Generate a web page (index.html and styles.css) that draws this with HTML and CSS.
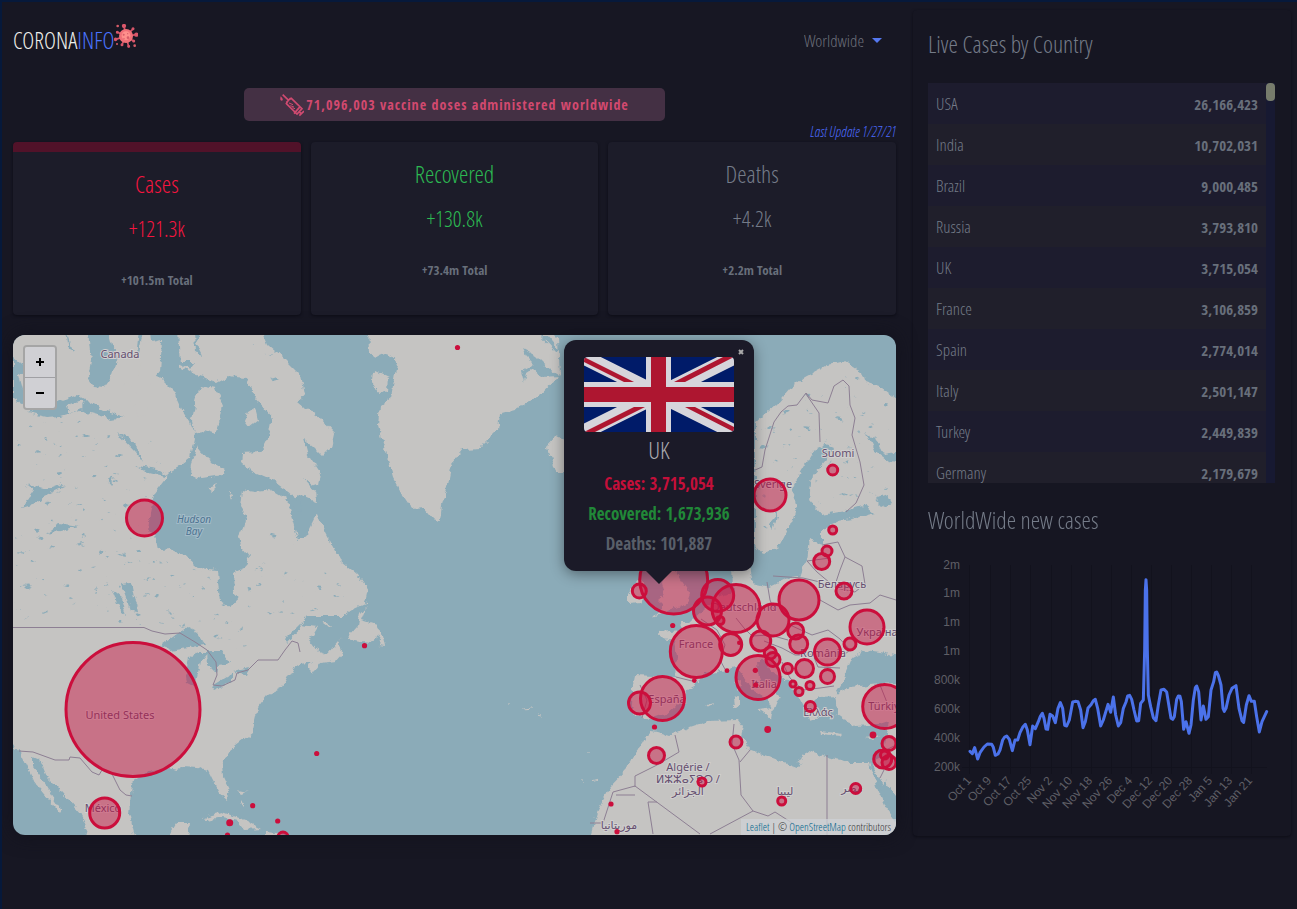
FILE: index.html
```html
<!DOCTYPE html>
<html lang="en">
<head>
<meta charset="utf-8">
<meta name="viewport" content="width=device-width, initial-scale=1">
<title>CoronaInfo</title>
<link rel="stylesheet" href="styles.css">
</head>
<body>
<div class="app">
  <main class="main">
    <header class="header">
      <h1 class="logo">CORONA<span class="logo-accent">INFO</span><svg class="logo-icon" viewBox="0 0 72 72" aria-hidden="true">
        <g stroke="#d8566a" stroke-width="5" stroke-linecap="round" fill="#e0606a">
          <path d="M36 36 30 6M36 36 58 14M36 36 68 32M36 36 60 52M36 36 44 68M36 36 24 62M36 36 5 46M36 36 9 24"/>
          <circle cx="30" cy="6" r="4"/><circle cx="57" cy="14" r="2"/><circle cx="67" cy="32" r="4"/><circle cx="59" cy="51" r="2"/><circle cx="44" cy="67" r="2"/><circle cx="24" cy="62" r="2"/><circle cx="5" cy="46" r="3"/><circle cx="10" cy="25" r="2"/>
        </g>
        <circle cx="36" cy="36" r="21" fill="#f07078"/><circle cx="36" cy="35" r="13" fill="#ff908c"/>
        <g fill="#d65c68"><circle cx="29" cy="32" r="3"/><circle cx="41" cy="29" r="2"/><circle cx="42" cy="41" r="4"/><circle cx="30" cy="44" r="2"/><circle cx="11" cy="6" r="4"/><circle cx="62" cy="65" r="4"/><circle cx="9" cy="60" r="3"/></g>
      </svg></h1>
      <div class="picker">
        <select class="picker-select" aria-label="Country"><option>Worldwide</option></select>
        <span class="picker-arrow"></span>
      </div>
    </header>

    <p class="banner"><svg class="banner-icon" viewBox="0 0 72 68" fill="none" stroke="#d04a70" stroke-width="5" aria-hidden="true">
      <path d="M8 3 26 20M19 27 32 13M23 23 19 30 51 61 66 45 34 14 29 17M42 60 61 38M55 54 66 60M58 66 72 52"/>
      <path d="M27 28 39 33M31 36 42 40M37 42 45 45" stroke-width="3"/>
      <path d="M2 8C0 16 0 21 5 21S10 16 2 8Z" fill="#d04a70" stroke="none"/>
    </svg>71,096,003 vaccine doses administered worldwide</p>
    <p class="updated">Last Update 1/27/21</p>

    <section class="stats">
      <article class="stat stat-cases stat-active"><h2 class="stat-title">Cases</h2><p class="stat-number">+121.3k</p><p class="stat-total">+101.5m Total</p></article>
      <article class="stat stat-recovered"><h2 class="stat-title">Recovered</h2><p class="stat-number">+130.8k</p><p class="stat-total">+73.4m Total</p></article>
      <article class="stat stat-deaths"><h2 class="stat-title">Deaths</h2><p class="stat-number">+4.2k</p><p class="stat-total">+2.2m Total</p></article>
    </section>

    <section class="map">
      <svg class="map-canvas" viewBox="13 335 883 500" preserveAspectRatio="xMidYMid slice" role="img" aria-label="Map of cases">
        <defs>
          <filter id="coast" x="-5%" y="-5%" width="110%" height="110%" color-interpolation-filters="sRGB">
            <feTurbulence type="fractalNoise" baseFrequency="0.13" numOctaves="4" seed="4" result="n"/>
            <feDisplacementMap in="SourceGraphic" in2="n" scale="7" xChannelSelector="R" yChannelSelector="G"/>
          </filter>
          <filter id="ponds" x="0" y="0" width="100%" height="100%" color-interpolation-filters="sRGB">
            <feTurbulence type="fractalNoise" baseFrequency="0.09 0.12" numOctaves="4" seed="11"/>
            <feColorMatrix values="0 0 0 0 .545  0 0 0 0 .671  0 0 0 0 .722  12 0 0 0 -8.7"/>
            <feComposite in2="SourceAlpha" operator="in"/>
          </filter>
        </defs>
        <rect x="13" y="335" width="883" height="500" fill="#8babb8"/>

        <g filter="url(#coast)">
          <!-- North America -->
          <g fill="#c5c4c2">
            <path d="M0 320H258L268 345 283 358 300 375 304 395 298 402 305 408 320 418 335 434 332 448 323 457 313 447 304 440 308 455 320 473 318 487 304 478 316 492 317 502 305 497 300 494 288 505 298 540 307 534 317 514 326 533 335 550 340 560 358 575 368 590 365 604 352 610 343 616 307 616 300 625 318 627 310 640 319 652 336 658 300 664 293 668 283 687 267 695 258 707 252 733 230 750 222 763 223 777 229 790 227 799 220 793 213 780 208 770 197 767 183 766 177 770 167 768 150 772 133 780 131 793 129 813 137 845H84L88 830 80 813 63 793 47 777 40 760 33 757 33 767 43 780 53 797 62 810 60 813 43 793 33 780 27 767 20 753 13 745H0Z"/>
            <path d="M342 636 338 642 342 654 336 661 320 663 313 673 308 668 313 660 327 654ZM367 605 361 620 377 625 383 637 385 646 378 645 380 635 370 642 352 640 348 637 358 626 360 613ZM320 620 334 625 328 626ZM170 835 177 823 189 823 187 840H170ZM204 817 222 812 245 820 262 829 245 830 238 821 222 817 205 820ZM237 790 247 792 241 794ZM241 800 244 808 240 805ZM265 832 288 834 289 840H265Z"/>
          </g>
          <g fill="#8babb8">
            <path d="M88 330H108L112 345 118 355 111 378 104 388 94 387 88 377 91 361ZM66 330 73 352 69 350ZM139 330H143L139 355 137 348ZM150 330H178L180 366 194 374 217 382 228 376 246 378 255 397 272 417 268 438 261 452 242 453 241 462 250 470 273 480 300 500 301 514 285 499 270 490 256 492 242 490 240 506 247 517 244 528 239 538 243 549 249 557 244 568 233 573 234 591 238 599 231 607 220 601 217 570 200 568 188 558 170 549 159 550 157 540 148 531 150 514 154 494 169 474 190 458 195 434 190 423 183 412 174 392 158 376 152 351ZM194 330H201L197 345 202 355 195 353ZM176 362 195 362 190 368ZM28 413 44 406 78 395 104 410 124 417 112 419 80 410 60 416 46 417ZM13 357 28 370 19 375 26 401 13 398ZM13 395 27 403 20 405Z"/>
            <path d="M22 508 34 490 26 484 36 487 46 490 62 484 65 486 44 496 38 503ZM46 534 59 524 79 527 61 531ZM117 432 135 442 142 461 136 452ZM135 466 158 469 170 477 148 472ZM107 480 111 474 112 486ZM101 548 106 550 99 556ZM121 584 131 583 137 611 131 610ZM112 590 122 598 127 617 120 611ZM180 627 184 626 183 624ZM160 647 178 634 187 627 197 632 205 645 181 648 169 650ZM186 675 189 656 200 652 208 652 200 662 195 687 187 683ZM206 651 222 651 231 663 219 665 217 675 207 665ZM213 685 233 673 233 681 216 689ZM232 671 250 667 247 675ZM284 640 300 624 301 628 286 644Z"/>
          </g>
          <g fill="#c5c4c2">
            <path d="M200 385 215 388 222 405 217 434 204 430 195 435 192 420 195 405ZM197 446 208 460 225 469 222 475 202 478 190 475 191 463ZM247 413 255 408 258 420 249 427 244 420ZM207 487 217 483 212 491ZM229 491 233 493 231 500ZM122 386 130 383 137 394 130 400ZM140 345 162 341 160 372 150 385 139 376ZM67 406 84 400 82 408 70 413ZM135 405 143 402 149 414 138 418Z"/>
          </g>
          <!-- Greenland and Iceland -->
          <path fill="#c5c4c2" d="M368 325H545L558 338 560 375 536 398 515 410 500 414 498 430 480 448 463 449 452 463 448 484 442 505 440 521 433 519 424 508 412 509 402 494 393 477 386 452 378 424 380 405 391 397 397 363 388 353 379 357 369 353ZM374 370 389 377 388 390 378 393 373 382ZM546 447 556 436 570 443V472H556L552 458 548 456Z"/>
          <path fill="#8babb8" d="M540 335 547 335 558 348 556 352ZM522 348 535 355 542 362 552 371 560 376 541 377 532 369 526 373 524 382 521 371 534 364 526 356Z"/>
          <!-- Europe, Turkey and the Levant -->
          <g fill="#c5c4c2">
            <path d="M910 405 896 398 882 388 865 382 862 372 845 361 828 365 805 377 788 390 776 404 767 412 755 422V545L763 554 780 545 791 524 796 505 792 490 800 474 815 449 826 445 833 448 826 460 812 476 809 500 822 515 845 511 866 505 875 513 852 519 838 521 822 529 822 544 810 540 807 560 803 568 800 577 789 578 770 587 752 583 748 560 733 562 734 592 716 597 703 610 690 622 681 622 682 630 658 632 663 638 674 640 677 656 675 677 635 675 633 685 632 706 635 715 650 719 668 713 685 698 687 690 698 684 704 674 718 672 736 667 744 678 752 689 766 698 773 711 777 701 782 700 775 693 763 684 758 673 757 660 764 660 770 670 788 681 797 693 804 706 809 720 820 717 813 703 820 696 835 695 842 684 844 678 853 657 866 650 880 652 910 658V682L880 684 850 687 834 695 838 715 854 726 876 725 889 721 885 740 881 757 871 762 878 780 884 792 884 778 910 815Z"/>
            <path d="M662 583 670 560 681 580 690 593 686 604 670 610 652 617 664 606 658 600 665 594ZM640 578 647 592 640 603 628 604 628 594ZM757 710 773 708 771 719ZM733 697 739 695 739 706 734 707ZM735 681 740 679 739 692ZM820 731 844 734 842 736 821 734ZM866 737 880 734 873 739ZM706 705 712 702 710 707ZM808 569 819 569 818 573Z"/>
            <!-- Africa -->
            <path d="M588 845 597 812 610 787 627 769 632 757 643 743 650 730 658 731 670 735 690 727 708 721 738 720 743 727 741 735 750 750 770 757 797 767 801 757 810 750 827 757 850 762 869 762 876 785 887 810 902 832V845Z"/>
          </g>
          <g fill="#8babb8">
            <path d="M866 433 878 441 885 455 910 450V465L890 462 874 450ZM875 500 888 495 892 502 882 507ZM903 500 910 515V490ZM868 764 879 787 900 823V803L887 788 887 778 883 787 874 770ZM770 522 778 512 773 532Z"/>
          </g>
          <path fill="none" stroke="#c5c4c2" d="M507 703H509M521 709 532 708M538 715 542 716M587 751H590M583 778V783M590 781 597 779M252 715 256 707"/>
        </g>

        <g filter="url(#ponds)">
          <path d="M14 425 80 420 140 430 165 455 145 500 145 545 165 560 212 575 220 605 240 600 260 560 280 510 300 560 340 580 345 605 290 615 240 650 190 625 14 625ZM755 430 800 390 850 370 890 405 896 500 850 505 820 510 815 480 840 450 820 440 780 480 775 535 755 540Z"/>
          <path d="M270 335 300 375 300 395 285 400 262 365 240 335Z"/>
        </g>

        <g fill="none" stroke="#8d7f93" stroke-width="1">
          <path d="M13 627.500H144L152 631 165 634 180 633 195 642 207 650 216 662 217 675 213 685 222 686 235 680 237 673 248 670 258 660 278 660 285 650 292 641 298 643 300 652M19 751 33 752 55 760 69 760 70 757 80 758 92 772 99 775 102 770 112 774 120 790 126 795 132 796"/>
          <path d="M755 470 762 467 765 450 774 422 781 412 788 406 797 405 806 393 812 400 828 403 834 386 843 380 849 386 850 405 855 418 852 435 860 462 864 485 856 503 846 512M806 394 819 413 820 442"/>
          <path d="M822 545 838 542 845 557 862 566 865 584 855 592 836 588 817 572 807 561 830 558M767 582 770 600 775 612M773 576 803 578 820 582M845 557 840 570 835 585M820 600 838 610 850 605 870 603 880 595 896 600M790 625 812 635 828 630 840 639 850 650 840 658M736 618 744 628 752 636 770 635 788 640M701 619 717 630 725 645 720 660 726 671M676 677 696 682M640 685 647 700 642 718M764 641 782 648 795 655 813 655 818 667 840 668M782 662 790 678 803 690 820 688 834 686M880 685 888 705"/>
          <path d="M675 735 679 752 657 765 635 776V787M635 786 700 834M590 823H603L613 792 635 786M616 795H635M648 802H657M648 802 653 834M710 834 753 811 741 795 739 760 732 744 734 724M753 811 768 816 775 812 800 828M827 755V835M740 762 750 750M881 754 884 770 880 778M886 750 896 745"/>
        </g>

        <g class="map-labels">
          <text x="120" y="358">Canada</text><text class="water" x="194" y="523">Hudson</text><text class="water" x="194" y="535">Bay</text>
          <text x="120" y="719">United States</text><text x="103" y="812">México</text><text x="838" y="457">Suomi</text><text x="773" y="488">Sverige</text>
          <text x="842" y="588">Беларусь</text><text x="744" y="611">Deutschland</text><text x="696" y="648">France</text><text x="823" y="657">România</text>
          <text x="877" y="636">Україна</text><text x="764" y="688">Italia</text><text x="667" y="703">España</text><text x="818" y="716">Ελλάς</text><text x="887" y="710">Türkiye</text>
          <text x="688" y="771">Algérie /</text><text x="688" y="783">ⵍⵣⵣⴰⵢⴻⵔ /</text><text x="688" y="795">الجزائر</text><text x="785" y="795">ليبيا</text><text x="852" y="792">مصر</text><text x="619" y="829">موريتانيا</text>
        </g>

        <g class="bubbles">
          <circle cx="144.500" cy="518" r="18"/><circle cx="133" cy="709.500" r="67"/><circle cx="104.700" cy="813" r="15"/>
          <circle cx="283" cy="837" r="5"/><circle cx="770" cy="495" r="16"/><circle cx="832.700" cy="470" r="5"/><circle cx="832.700" cy="530" r="4"/>
          <circle cx="827" cy="551" r="5"/><circle cx="821.700" cy="561.500" r="8"/><circle cx="673.700" cy="580" r="34"/><circle cx="639.300" cy="591" r="7"/>
          <circle cx="717.700" cy="595.500" r="16"/><circle cx="707.500" cy="611" r="14"/><circle cx="736" cy="608.500" r="24"/><circle cx="720" cy="620.500" r="4"/>
          <circle cx="799" cy="600" r="20"/><circle cx="773" cy="620" r="16"/><circle cx="844" cy="591" r="8"/><circle cx="795.700" cy="631" r="8"/>
          <circle cx="798.700" cy="644" r="9"/><circle cx="827.500" cy="652" r="13"/><circle cx="850" cy="644" r="6"/><circle cx="867" cy="627" r="17"/>
          <circle cx="696.300" cy="651.500" r="26"/><circle cx="730.700" cy="644.500" r="11"/><circle cx="760.700" cy="641" r="10"/><circle cx="770.300" cy="653" r="6"/>
          <circle cx="773" cy="659.500" r="7"/><circle cx="758" cy="677.500" r="22"/><circle cx="787.500" cy="668.500" r="5"/><circle cx="804.500" cy="668.500" r="9"/>
          <circle cx="827.500" cy="676.500" r="7"/><circle cx="793" cy="684" r="3"/><circle cx="810" cy="685.500" r="4"/><circle cx="799" cy="691.500" r="4"/>
          <circle cx="810.300" cy="706.500" r="5"/><circle cx="884.700" cy="706.500" r="22"/><circle cx="662.500" cy="698.500" r="22"/><circle cx="639.500" cy="703" r="11"/>
          <circle cx="656.500" cy="755.500" r="8"/><circle cx="736" cy="742" r="6"/><circle cx="702" cy="782" r="4"/><circle cx="781.700" cy="801" r="4"/>
          <circle cx="855.700" cy="788.500" r="5"/><circle cx="889" cy="743.500" r="7"/><circle cx="882.700" cy="759" r="9"/><circle cx="884.500" cy="755" r="4"/><circle cx="889" cy="762.500" r="7"/>
        </g>
        <g fill="#cb0e3c">
          <circle cx="457.500" cy="347.500" r="2.600"/><circle cx="364.500" cy="645.700" r="2.600"/><circle cx="316.700" cy="753.500" r="2.600"/><circle cx="252.700" cy="805.700" r="2.600"/><circle cx="229.700" cy="822.700" r="3.500"/><circle cx="277.700" cy="821" r="2.600"/><circle cx="227.500" cy="835" r="2.600"/>
          <circle cx="739.300" cy="642.700" r="2.300"/><circle cx="755.300" cy="670.300" r="2.600"/><circle cx="755.700" cy="685" r="2.600"/><circle cx="727" cy="670.700" r="2.400"/><circle cx="694.300" cy="680.500" r="2.400"/><circle cx="672.700" cy="625.500" r="2.600"/>
          <circle cx="654.500" cy="727" r="2.600"/><circle cx="767.700" cy="729.500" r="3.400"/><circle cx="873" cy="735" r="3.400"/><circle cx="611" cy="804" r="2.600"/><circle cx="617" cy="831.700" r="2.600"/>
        </g>
      </svg>

      <div class="zoom">
        <button class="zoom-button" type="button" aria-label="Zoom in"><span class="bar"></span><span class="bar bar-upright"></span></button>
        <button class="zoom-button" type="button" aria-label="Zoom out"><span class="bar"></span></button>
      </div>

      <aside class="popup">
        <button class="popup-close" type="button" aria-label="Close"><svg viewBox="0 0 6 6"><path d="M1 1 5 5M5 1 1 5" stroke="#aaa" stroke-width="2"/></svg></button>
        <svg class="flag" viewBox="0 0 150 75" role="img" aria-label="Flag of the United Kingdom">
          <path fill="#001b69" d="M0 0H150V75H0Z"/>
          <path stroke="#d6d5db" stroke-width="15" d="M0 0 150 75M150 0 0 75"/>
          <path fill="#ae1630" d="M0 0V5L40 25H50ZM150 0H139L90 25H101ZM150 75V70L111 50H101ZM0 75H11L61 50H50Z"/>
          <path fill="#d6d5db" d="M62 0H87V25H150V50H87V75H62V50H0V25H62Z"/>
          <path fill="#ae1630" d="M67 0H82V30H150V45H82V75H67V45H0V30H67Z"/>
        </svg>
        <h2 class="popup-name">UK</h2>
        <p class="popup-line popup-cases">Cases: 3,715,054</p>
        <p class="popup-line popup-recovered">Recovered: 1,673,936</p>
        <p class="popup-line popup-deaths">Deaths: 101,887</p>
      </aside>

      <p class="credit"><a href="#leaflet">Leaflet</a> | © <a href="#osm">OpenStreetMap</a> contributors</p>
    </section>
  </main>

  <aside class="side">
    <h2 class="side-title">Live Cases by Country</h2>
    <div class="scroller">
      <div class="scroller-view">
        <table class="countries">
          <tr><td>USA</td><td class="count">26,166,423</td></tr>
          <tr><td>India</td><td class="count">10,702,031</td></tr>
          <tr><td>Brazil</td><td class="count">9,000,485</td></tr>
          <tr><td>Russia</td><td class="count">3,793,810</td></tr>
          <tr><td>UK</td><td class="count">3,715,054</td></tr>
          <tr><td>France</td><td class="count">3,106,859</td></tr>
          <tr><td>Spain</td><td class="count">2,774,014</td></tr>
          <tr><td>Italy</td><td class="count">2,501,147</td></tr>
          <tr><td>Turkey</td><td class="count">2,449,839</td></tr>
          <tr><td>Germany</td><td class="count">2,179,679</td></tr>
        </table>
      </div>
      <div class="scroller-track"><div class="scroller-thumb"></div></div>
    </div>
    <h2 class="side-title">WorldWide new cases</h2>
    <svg class="chart" viewBox="928 550 347 270" role="img" aria-label="New cases per day">
      <path d="M969.500 565V774M990.500 565V774M1010.500 565V774M1030.500 565V774M1051.500 565V774M1071.500 565V774M1091.500 565V774M1111.500 565V774M1131.500 565V774M1151.500 565V774M1171.500 565V774M1191.500 565V774M1211.500 565V774M1231.500 565V774M1251.500 565V774M962 767.500H1267" stroke="#12121d" fill="none"/>
      <g class="axis axis-y"><text x="960" y="569">2m</text><text x="960" y="597">1m</text><text x="960" y="626">1m</text><text x="960" y="655">1m</text><text x="960" y="684">800k</text><text x="960" y="713">600k</text><text x="960" y="742">400k</text><text x="960" y="771">200k</text></g>
      <g class="axis">
        <text transform="translate(972 781) rotate(-48)">Oct 1</text><text transform="translate(992 781) rotate(-48)">Oct 9</text><text transform="translate(1012 781) rotate(-48)">Oct 17</text><text transform="translate(1032 781) rotate(-48)">Oct 25</text><text transform="translate(1053 781) rotate(-48)">Nov 2</text><text transform="translate(1073 781) rotate(-48)">Nov 10</text><text transform="translate(1093 781) rotate(-48)">Nov 18</text><text transform="translate(1113 781) rotate(-48)">Nov 26</text><text transform="translate(1133 781) rotate(-48)">Dec 4</text><text transform="translate(1153 781) rotate(-48)">Dec 12</text><text transform="translate(1173 781) rotate(-48)">Dec 20</text><text transform="translate(1193 781) rotate(-48)">Dec 28</text><text transform="translate(1213 781) rotate(-48)">Jan 5</text><text transform="translate(1233 781) rotate(-48)">Jan 13</text><text transform="translate(1253 781) rotate(-48)">Jan 21</text>
      </g>
      <polyline transform="translate(910 490) scale(.33333)" fill="none" stroke="#4b72ea" stroke-width="9" stroke-linejoin="round" stroke-linecap="round" points="180,784 187,791 194,773 203,807 210,788 222,771 232,762 245,763 250,772 256,796 264,792 270,780 278,750 284,741 290,738 298,748 307,782 315,750 323,750 330,728 338,712 346,703 352,720 360,764 368,708 376,716 385,695 391,679 397,670 402,685 408,717 413,718 420,673 428,678 436,698 444,655 451,638 458,655 464,706 470,708 478,690 488,636 496,634 504,635 512,660 519,713 526,695 534,654 543,644 550,632 556,628 563,655 572,708 580,690 594,643 602,667 610,621 617,675 625,708 632,698 640,655 648,636 653,618 659,616 665,628 672,660 680,693 686,692 692,640 700,630 704,480 706,300 708,269 710,300 712,480 715,615 722,650 730,683 738,692 745,645 753,600 762,598 770,606 778,655 783,685 788,688 793,680 800,628 805,618 810,619 814,635 821,718 828,695 837,730 843,705 850,630 856,593 860,588 866,605 873,690 880,648 888,688 895,680 903,600 911,575 916,548 920,546 925,556 933,585 939,655 943,664 948,655 957,615 966,595 978,587 987,655 996,692 1001,697 1009,645 1017,617 1024,634 1033,634 1040,680 1048,726 1056,695 1070,665"/>
    </svg>
  </aside>
</div>
</body>
</html>
```
FILE: styles.css
```css
* { box-sizing: border-box; }
body {
  margin: 0;
  min-height: 100vh;
  background: #171723;
  border: solid #06193b;
  border-width: 2px 0 0 2px;
  color: #747b88;
  font-family: "Open Sans Condensed Light", "Roboto Condensed", "Liberation Sans", sans-serif;
  font-size: 16px;
}
h1, h2, p { margin: 0; font-weight: 400; }
.app {
  display: grid;
  grid-template-columns: minmax(0, 883fr) minmax(0, 378fr);
  gap: 17px;
  padding: 8px 6px 0 11px;
}

.header { display: flex; justify-content: space-between; align-items: center; height: 60px; }
.logo { display: flex; align-items: center; color: #f0f0ec; font-size: 23px; line-height: 32px; }
.logo-accent { color: #4a74ff; }
.logo-icon { width: 24px; height: 24px; margin-bottom: 8px; }
.picker { display: flex; align-items: center; gap: 7px; padding-right: 14px; }
.picker-select { appearance: none; border: 0; padding: 0; background: none; color: #6c6f7a; font: inherit; font-size: 17px; }
.picker-arrow { border: 5px solid transparent; border-top-color: #5578f0; border-bottom: 0; }

.banner, .stat-total, .popup-line, .count { font-family: "Open Sans Condensed", "Roboto Condensed", "Liberation Sans", sans-serif; font-weight: 700; }
.banner {
  display: flex;
  align-items: center;
  justify-content: center;
  gap: 2px;
  width: 421px;
  max-width: 100%;
  height: 33px;
  margin: 18px auto 0;
  border-radius: 5px;
  background: #443044;
  color: #d2496f;
  font-size: 14px;
  letter-spacing: 1px;
}
.banner-icon { width: 24px; height: 24px; }
.updated { height: 21px; color: #4d6cff; font-size: 14px; font-style: italic; line-height: 21px; text-align: right; }

.stats { display: grid; grid-template-columns: repeat(3, minmax(0, 1fr)); gap: 10px; }
.stat {
  min-height: 173px;
  padding: 16px;
  border-radius: 4px;
  background: #1c1c29;
  box-shadow: 0 1px 3px #0d0d16;
  text-align: center;
}
.stat-active { border-top: 10px solid #511229; }
.stat-title, .stat-number { font-size: 24px; line-height: 32px; }
.stat-number { margin-top: 12px; font-size: 22px; }
.stat-total { margin-top: 26px; color: #686f7b; font-size: 13px; line-height: 20px; }
.stat-cases .stat-title, .stat-cases .stat-number { color: #f5153f; }
.stat-recovered .stat-title, .stat-recovered .stat-number { color: #2cb852; }

.map { position: relative; height: 500px; margin-top: 20px; border-radius: 12px; box-shadow: 0 0 20px #12121c; }
.map-canvas { display: block; width: 100%; height: 100%; border-radius: 12px; }
.map-labels { fill: #66506f; stroke: #d0cfcf; stroke-width: 2px; paint-order: stroke; font-family: "Noto Sans", "DejaVu Sans", sans-serif; font-size: 11px; text-anchor: middle; }
.map-labels .water { fill: #4d7391; stroke: #a2bbc8; font-style: italic; font-size: 10px; }
.bubbles { fill: #cc1040; fill-opacity: .45; stroke: #cb0e3c; stroke-width: 3px; }
.zoom { position: absolute; top: 10px; left: 10px; border: 2px solid #a5a5a5; border-radius: 4px; overflow: hidden; }
.zoom-button { position: relative; display: grid; place-items: center; width: 30px; height: 30px; border: 0; padding: 0; background: #d0d0d4; }
.zoom-button + .zoom-button { height: 31px; border-top: 1px solid #a0a0a4; }
.bar { grid-area: 1 / 1; width: 8px; height: 2px; background: #000; }
.bar-upright { width: 2px; height: 8px; }

.popup {
  position: absolute;
  top: 5px;
  left: 551px;
  width: 190px;
  padding: 17px 20px 12px;
  border-radius: 12px;
  background: #1b1a28;
  box-shadow: 0 3px 14px rgba(0, 0, 0, .4);
  text-align: center;
}
.popup::after { content: ""; position: absolute; top: 100%; left: 50%; margin-left: -13px; border: 13px solid transparent; border-top-color: #1b1a28; border-bottom: 0; }
.popup-close { position: absolute; top: 9px; right: 10px; display: flex; border: 0; padding: 0; background: none; }
.popup-close svg { width: 6px; height: 6px; }
.flag { display: block; width: 100%; border-radius: 4px; }
.popup-name { margin-bottom: 2px; color: #ababb0; font-size: 24px; line-height: 35px; }
.popup-line { font-size: 17px; line-height: 30px; white-space: nowrap; }
.popup-cases { color: #c40f3a; }
.popup-recovered { color: #218838; }
.popup-deaths { color: #595f69; }
.credit { position: absolute; right: 0; bottom: 0; padding: 0 5px; border-bottom-right-radius: 12px; background: rgba(205, 210, 214, .75); color: #333; font-size: 11px; line-height: 16px; }
.credit a { color: #00658c; text-decoration: none; }

.side { padding: 18px 16px 16px 15px; border-radius: 4px; background: #161622; box-shadow: 0 1px 3px #0d0d16; }
.side-title { font-size: 24px; line-height: 32px; }
.scroller { display: flex; height: 400px; margin: 23px 0 21px; }
.scroller-view { flex: 1; overflow-y: auto; scrollbar-width: none; }
.scroller-track { width: 9px; background: #171932; }
.scroller-thumb { height: 18px; border-radius: 4px; background: #777c6c; }
.countries { width: 100%; border-collapse: collapse; font-size: 17px; }
.countries td { height: 41px; padding: 0 8px; }
.countries tr:nth-child(odd) { background: #1d1c2e; }
.countries tr:nth-child(even) { background: #201f2b; }
.countries .count { color: #686f7b; text-align: right; font-size: 15px; }
.chart { display: block; width: 100%; margin-top: 14px; }
.axis { fill: #5f5f66; font-family: "Liberation Sans", sans-serif; font-size: 12px; text-anchor: end; }
```
